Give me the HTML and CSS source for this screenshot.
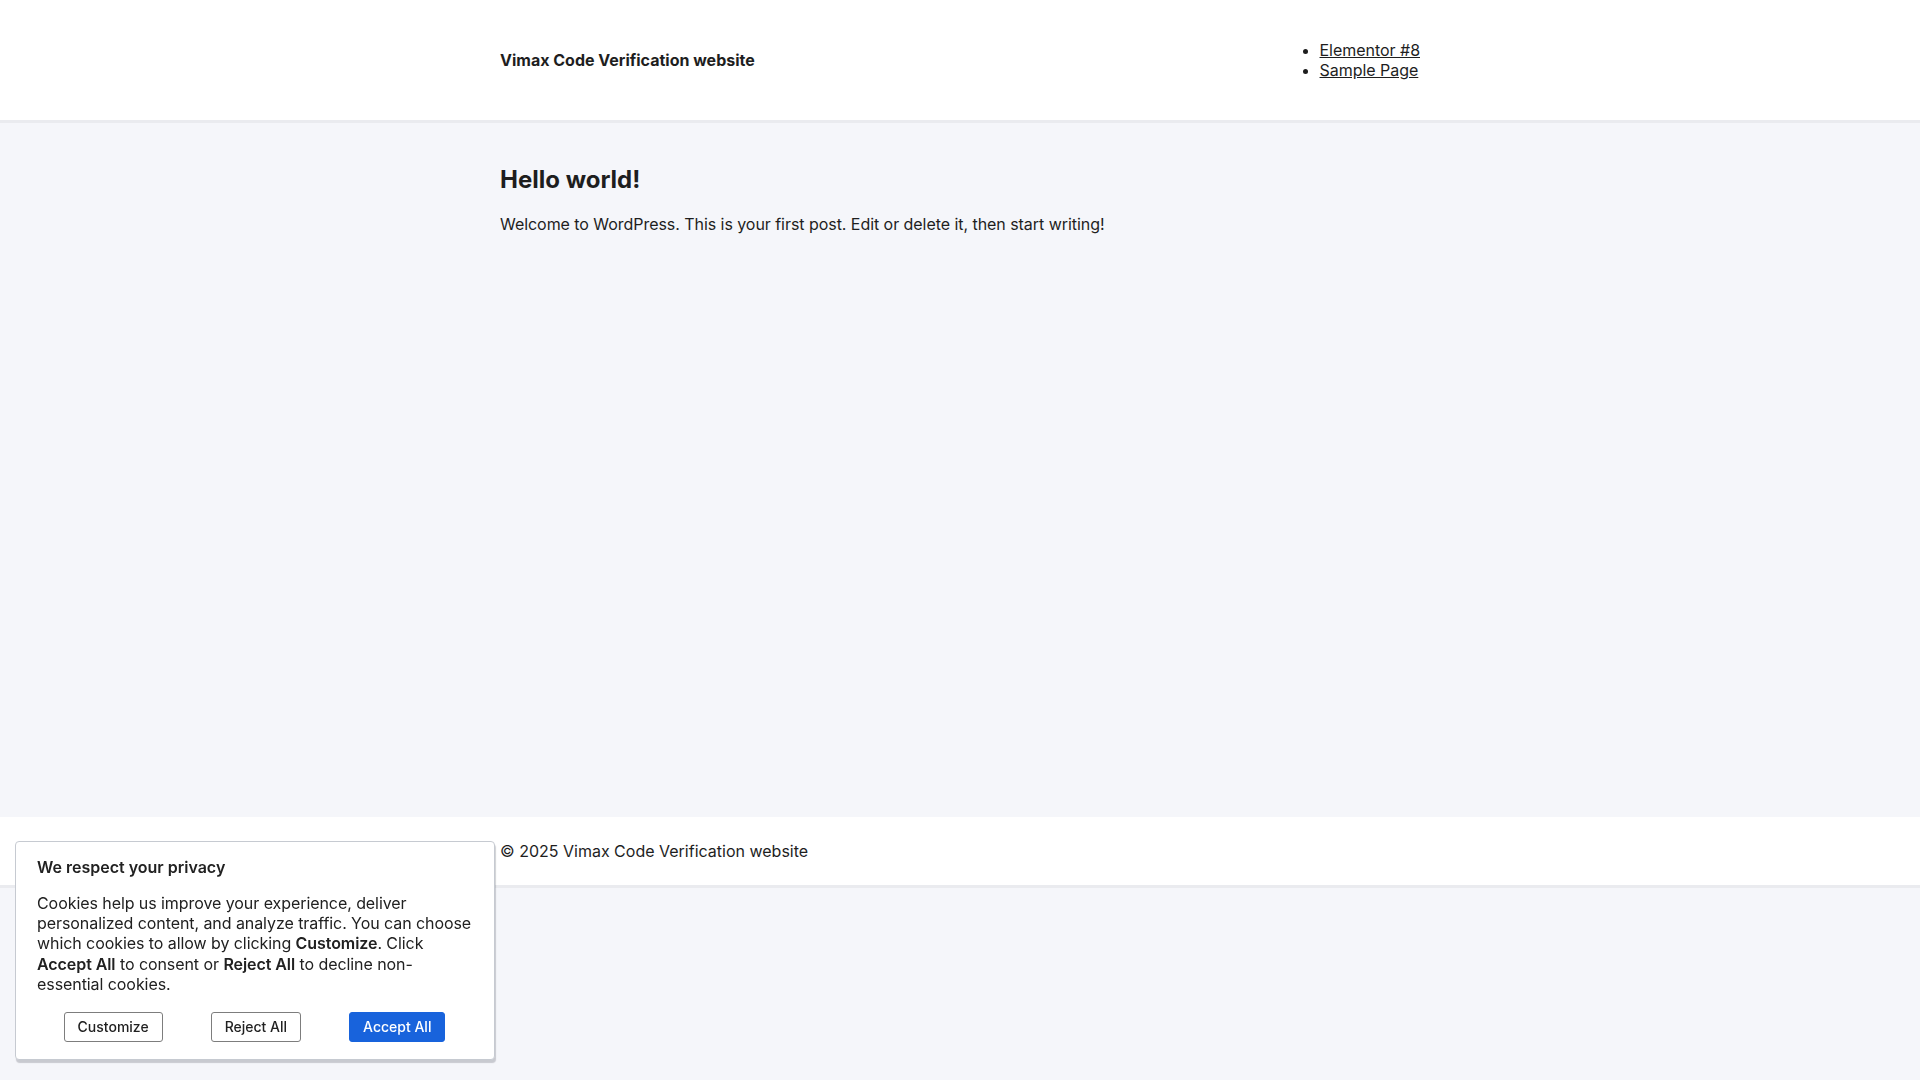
FILE: index.html
```html
<!DOCTYPE html>
<html lang="en">
<head>
<meta charset="utf-8">
<title>Vimax Code Verification website</title>
<link rel="stylesheet" href="styles.css">
</head>
<body>
<header class="site-header">
  <div class="wrap header-inner">
    <p class="site-title">Vimax Code Verification website</p>
    <nav class="site-nav">
      <ul class="nav-list">
        <li><a href="#">Elementor #8</a></li>
        <li><a href="#">Sample Page</a></li>
      </ul>
    </nav>
  </div>
</header>
<main class="site-main">
  <div class="wrap">
    <h1 class="post-title">Hello world!</h1>
    <p class="post-text">Welcome to WordPress. This is your first post. Edit or delete it, then start writing!</p>
  </div>
</main>
<footer class="site-footer">
  <div class="wrap">
    <p class="footer-text">© 2025 Vimax Code Verification website</p>
  </div>
</footer>
<div class="cookie-banner">
  <p class="cookie-title">We respect your privacy</p>
  <p class="cookie-text">Cookies help us improve your experience, deliver personalized content, and analyze traffic. You can choose which cookies to allow by clicking <strong>Customize</strong>. Click <strong>Accept All</strong> to consent or <strong>Reject All</strong> to decline non-essential cookies.</p>
  <div class="cookie-actions">
    <button class="cookie-btn">Customize</button>
    <button class="cookie-btn">Reject All</button>
    <button class="cookie-btn cookie-btn-primary">Accept All</button>
  </div>
</div>
</body>
</html>
```
FILE: styles.css
```css
html, body {
  margin: 0;
  padding: 0;
}
body {
  background: #f5f6fa;
  color: #1e1e1e;
  font-family: Inter, "Noto Sans", sans-serif;
  font-size: 16px;
}
.wrap {
  width: 920px;
  margin: 0 auto;
}
.site-header {
  background: #ffffff;
  height: 120px;
  border-bottom: 3px solid #eaebef;
}
.header-inner {
  height: 100%;
  display: flex;
  align-items: center;
  justify-content: space-between;
}
.site-title {
  margin: 0;
  font-size: 16px;
  font-weight: 700;
  line-height: 20px;
}
.nav-list {
  margin: 0;
  padding-left: 40px;
  list-style: disc;
  line-height: 20px;
  letter-spacing: -0.03px;
}
.nav-list a {
  color: #1e1e1e;
  text-decoration: underline;
}
.site-main {
  height: 652px;
  padding-top: 42px;
}
.post-title {
  margin: 0;
  font-size: 24px;
  line-height: 29px;
  font-weight: 700;
}
.post-text {
  margin: 18px 0 0;
  line-height: 24px;
  letter-spacing: -0.05px;
}
.site-footer {
  background: #ffffff;
  height: 68px;
  border-bottom: 3px solid #eaebef;
  display: flex;
  align-items: center;
}
.footer-text {
  margin: 0;
  line-height: 24px;
}
.cookie-banner {
  position: fixed;
  left: 15px;
  bottom: 20px;
  width: 480px;
  box-sizing: border-box;
  background: #ffffff;
  border: 1px solid #c6cad1;
  border-radius: 4px;
  box-shadow: 1px 3px 1px rgba(40, 45, 60, 0.22);
  padding: 15px 17px 17px 21px;
  color: #212121;
}
.cookie-title {
  margin: 0;
  font-size: 16px;
  font-weight: 600;
  line-height: 20px;
}
.cookie-text {
  margin: 16px 0 0;
  font-size: 16px;
  line-height: 20.2px;
  letter-spacing: -0.07px;
}
.cookie-text strong {
  font-weight: 600;
}
.cookie-actions {
  margin-top: 18px;
  display: flex;
  justify-content: center;
  gap: 48px;
  padding-right: 5px;
}
.cookie-btn {
  font-family: inherit;
  font-size: 14px;
  font-weight: 500;
  line-height: 16px;
  padding: 6px 13px;
  border: 1px solid #7d7d7d;
  border-radius: 3px;
  background: #ffffff;
  color: #212121;
}
.cookie-btn-primary {
  background: #1863dc;
  border-color: #1863dc;
  color: #ffffff;
}
```
